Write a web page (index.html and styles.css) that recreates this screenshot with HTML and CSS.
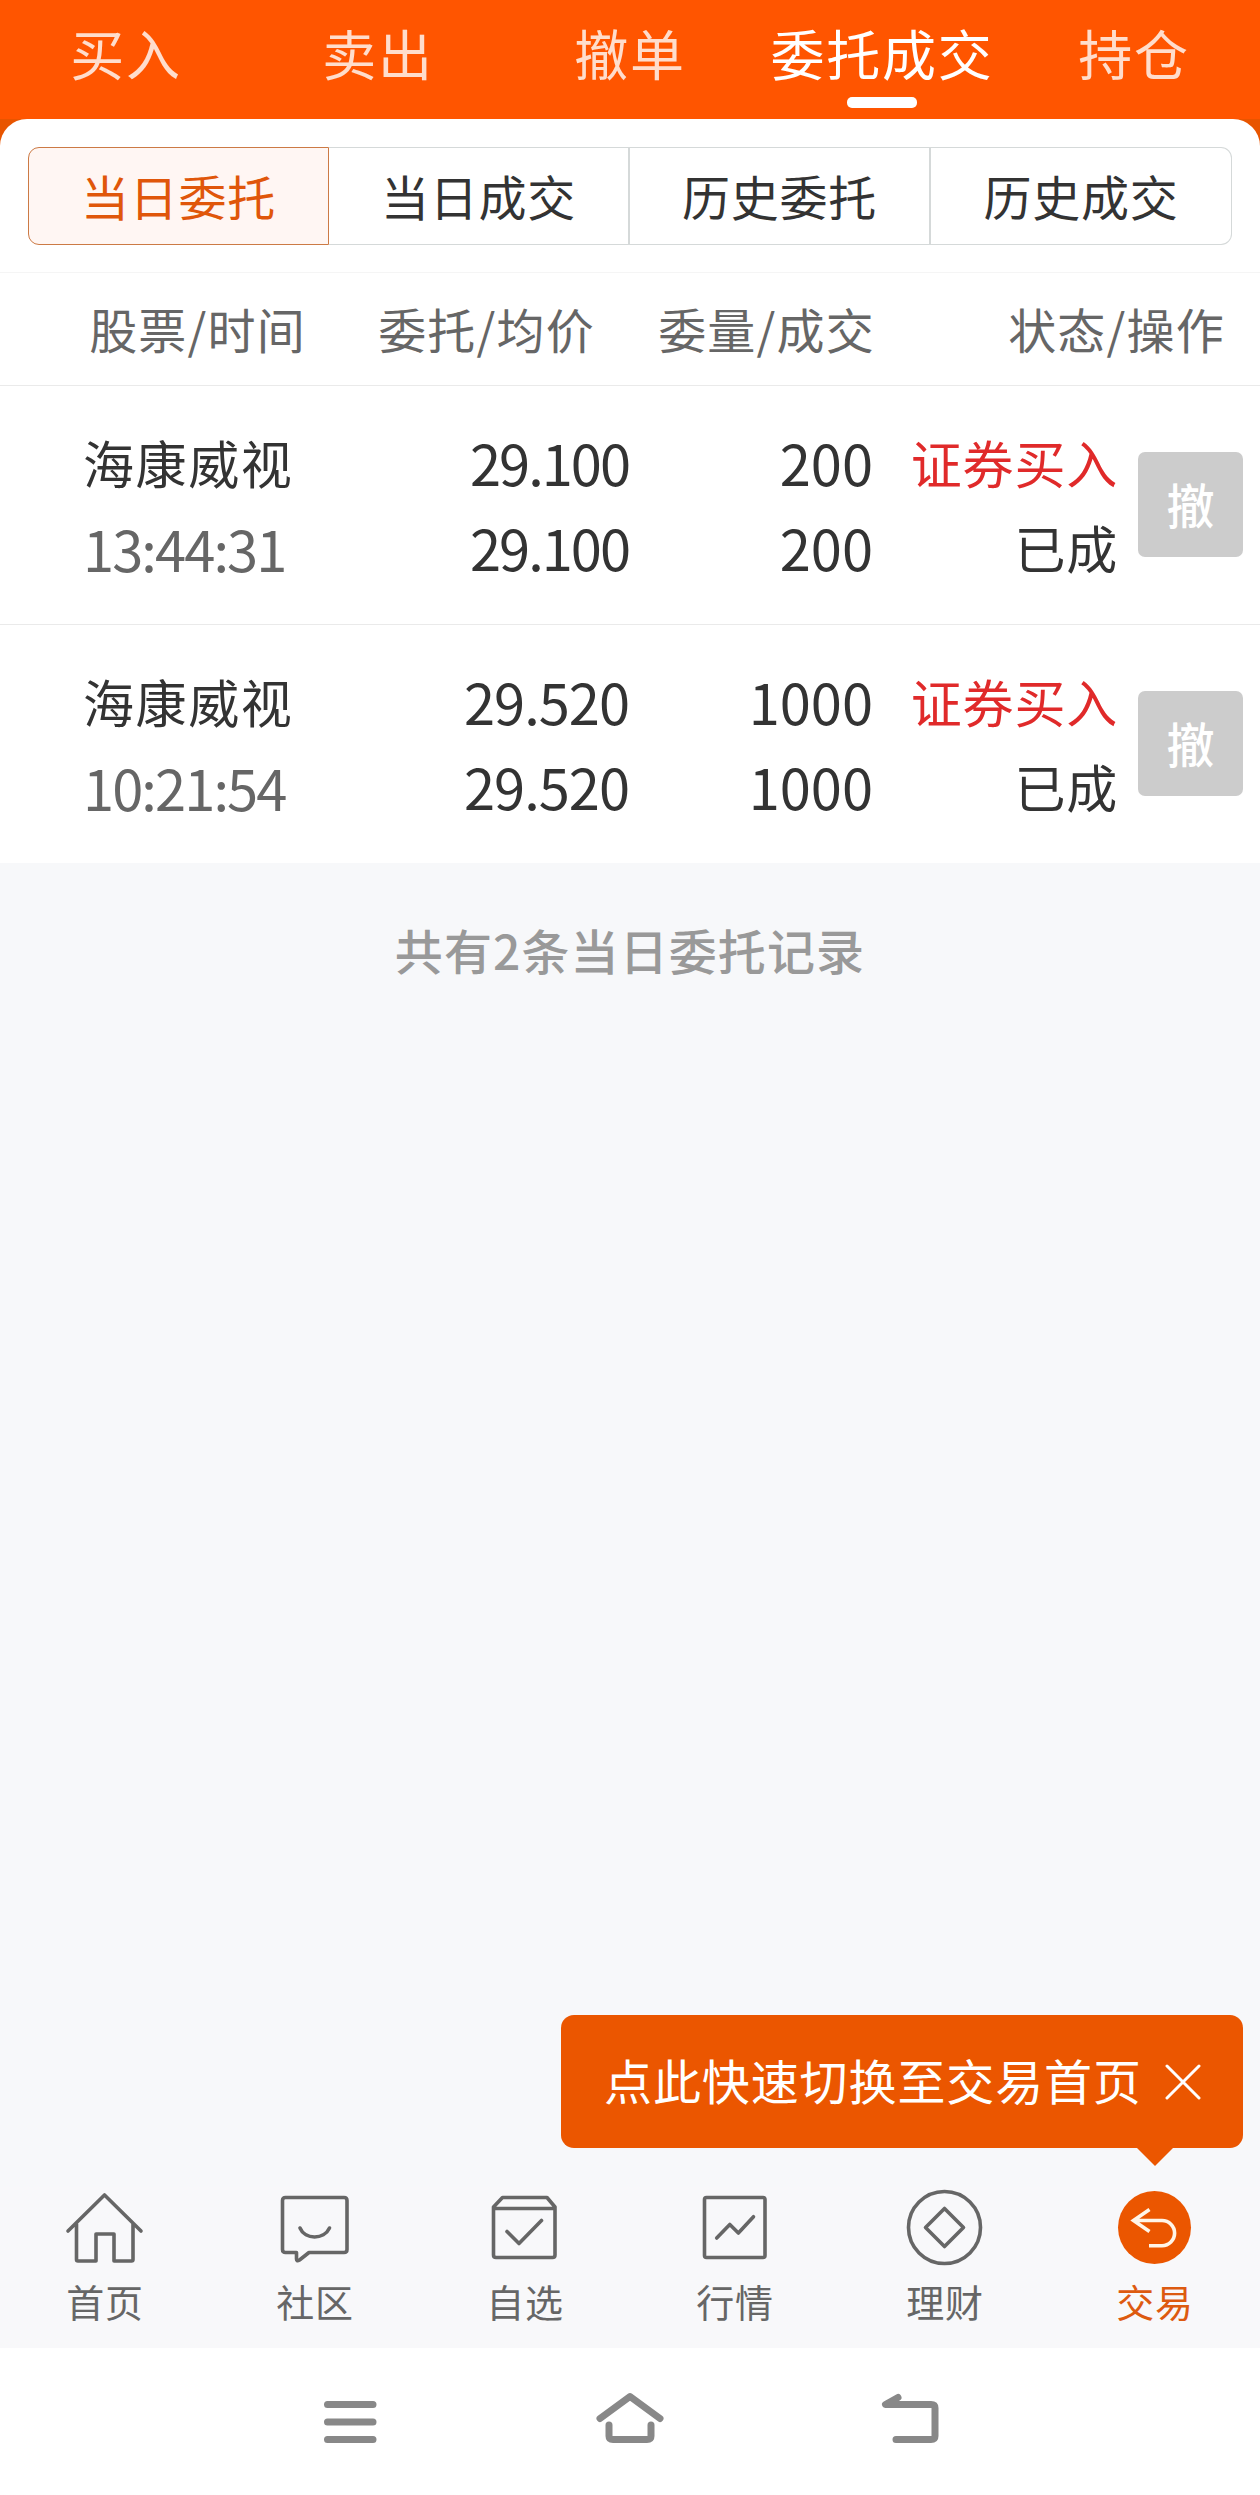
FILE: index.html
```
<!DOCTYPE html>
<html lang="zh-CN">
<head>
    <meta charset="UTF-8">
    <meta name="viewport" content="width=device-width, initial-scale=1.0">
    <title>委托成交</title>
    <link rel="stylesheet" href="styles.css">
</head>
<body>
    <nav class="top-tabs">
        <a class="top-tab">买入</a>
        <a class="top-tab">卖出</a>
        <a class="top-tab">撤单</a>
        <a class="top-tab active">委托成交</a>
        <a class="top-tab">持仓</a>
    </nav>

    <div class="panel-wrap">
        <div class="panel">
            <div class="segments">
                <div class="segment active">当日委托</div>
                <div class="segment">当日成交</div>
                <div class="segment">历史委托</div>
                <div class="segment">历史成交</div>
            </div>
            <div class="list-head">
                <span>股票/时间</span>
                <span>委托/均价</span>
                <span>委量/成交</span>
                <span>状态/操作</span>
            </div>
            <div class="order">
                <div class="cell stock"><span>海康威视</span><span class="time">13:44:31</span></div>
                <div class="cell price tight"><span>29.100</span><span>29.100</span></div>
                <div class="cell amount"><span>200</span><span>200</span></div>
                <div class="cell status"><span class="buy">证券买入</span><span>已成</span></div>
                <div class="cancel">撤</div>
            </div>
            <div class="order">
                <div class="cell stock"><span>海康威视</span><span class="time">10:21:54</span></div>
                <div class="cell price"><span>29.520</span><span>29.520</span></div>
                <div class="cell amount"><span>1000</span><span>1000</span></div>
                <div class="cell status"><span class="buy">证券买入</span><span>已成</span></div>
                <div class="cancel">撤</div>
            </div>
        </div>
    </div>

    <div class="summary">共有2条当日委托记录</div>

    <div class="tip">
        <span class="tip-text">点此快速切换至交易首页</span>
        <svg class="tip-close" width="36" height="36" viewBox="0 0 36 36"><path d="M2 2 34 34M34 2 2 34"/></svg>
    </div>

    <nav class="tab-bar">
        <a class="tab">
            <svg width="80" height="80" viewBox="0 0 80 80"><path d="M3 44 39.500 8 76 44M11.500 37V72.500Q11.500 74 13 74H31V47H49V74H66.500Q68 74 68 72.500V37"/></svg>
            <span>首页</span>
        </a>
        <a class="tab">
            <svg width="80" height="80" viewBox="0 0 80 80"><path d="M10.500 10.500H69Q72 10.500 72 13.500V62.500Q72 65.500 69 65.500H34L24.500 73Q21.500 75 21.500 72V65.500H10.500Q7.500 65.500 7.500 62.500V13.500Q7.500 10.500 10.500 10.500ZM25 41C30 53 49 53 54.500 41"/></svg>
            <span>社区</span>
        </a>
        <a class="tab">
            <svg width="80" height="80" viewBox="0 0 80 80"><path d="M17.500 10.500H62L70 20V68Q70 70.500 67.500 70.500H11Q8.500 70.500 8.500 68V20ZM8.500 21.500H70M22 44.500 34 56.500 56.500 33.500"/></svg>
            <span>自选</span>
        </a>
        <a class="tab">
            <svg width="80" height="80" viewBox="0 0 80 80"><rect x="9.500" y="10.500" width="60.500" height="60" rx="2"/><path d="M21.700 51 34.800 37.500 43.400 46 58.500 29.700"/></svg>
            <span>行情</span>
        </a>
        <a class="tab">
            <svg width="80" height="80" viewBox="0 0 80 80"><circle cx="39.500" cy="40.500" r="36"/><path d="M39.500 21.500 58.500 40.500 39.500 59.500 20.500 40.500Z"/></svg>
            <span>理财</span>
        </a>
        <a class="tab active">
            <svg width="80" height="80" viewBox="0 0 80 80"><circle class="disc" cx="39.500" cy="40.500" r="36.500"/><path class="arrow" d="M34.500 22.500 18.500 33.500 34.500 44.500M18.500 33.500H47A12.600 12.600 0 0 1 47 58.700H34"/></svg>
            <span>交易</span>
        </a>
    </nav>

    <div class="system-nav">
        <svg width="80" height="80" viewBox="0 0 80 80"><path d="M17.500 22.500H63M17.500 40H63M17.500 57.500H63"/></svg>
        <svg width="80" height="80" viewBox="0 0 80 80"><path d="M10 36.500 40 14.500 70 36.500M19 43V54Q19 57.500 23 57.500H57Q61 57.500 61 54V43"/></svg>
        <svg width="80" height="80" viewBox="0 0 80 80"><path d="M28 15.500 15.500 22.500H61Q65 22.500 65 26V54Q65 57.500 61 57.500H26"/></svg>
    </div>
</body>
</html>
```

FILE: styles.css
```
* {
    box-sizing: border-box;
}
body {
    margin: 0;
    height: 2495px;
    display: flex;
    flex-direction: column;
    font-family: "Noto Sans CJK SC", sans-serif;
    color: #333;
    background-color: #f7f8fa;
}
svg {
    display: block;
    fill: none;
    stroke-linecap: round;
    stroke-linejoin: round;
}

.top-tabs {
    display: flex;
    height: 119px;
    background-color: #ff5500;
}
.top-tab {
    position: relative;
    flex: 1;
    line-height: 105px;
    text-align: center;
    white-space: nowrap;
    font-size: 54px;
    letter-spacing: 1.7px;
    color: #ffddcc;
}
.top-tab.active {
    color: #fff;
}
.top-tab.active::after {
    content: "";
    position: absolute;
    left: 91px;
    top: 97px;
    width: 70px;
    height: 11px;
    border-radius: 5px;
    background-color: #fff;
}

.panel-wrap {
    background-color: #e85500;
}
.panel {
    padding-top: 28px;
    border-radius: 27px 27px 0 0;
    background-color: #fff;
}
.segments {
    display: flex;
    height: 98px;
    margin: 0 28px 27px;
}
.segment {
    width: 25%;
    border: 1px solid #d5d9d9;
    border-right-width: 2px;
    border-left-width: 0;
    line-height: 95px;
    text-align: center;
    font-size: 48px;
    letter-spacing: 0.8px;
}
.segment:first-child {
    border-radius: 11px 0 0 11px;
}
.segment:last-child {
    border-right-width: 1px;
    border-radius: 0 11px 11px 0;
}
.segment.active {
    border: 1px solid #cc7a45;
    color: #e0560a;
    background-color: #fff6f3;
}

.list-head {
    display: grid;
    grid-template-columns: 306px 289px 280px 350px;
    height: 114px;
    border-top: 1px solid #f5f5f5;
    border-bottom: 1px solid #eaeaea;
    line-height: 111px;
    text-align: right;
    font-size: 48px;
    letter-spacing: 1.2px;
    color: #666;
}

.order {
    display: grid;
    grid-template-columns: 245px 301px 244px 245px 125px;
    align-items: center;
    height: 239px;
    padding-left: 83px;
    border-bottom: 1px solid #eaeaea;
}
.order:last-child {
    height: 238px;
    border-bottom: none;
}
.cell {
    display: flex;
    flex-direction: column;
    line-height: 85px;
    text-align: right;
    font-size: 51px;
    letter-spacing: 1.6px;
}
.stock {
    text-align: left;
    white-space: nowrap;
}
.status {
    letter-spacing: 0.8px;
}
.price, .amount, .time {
    font-size: 56px;
}
.price, .amount {
    padding-bottom: 2px;
}
.price {
    letter-spacing: -1px;
}
.price.tight {
    letter-spacing: -2px;
}
.amount {
    letter-spacing: 0;
}
.time {
    letter-spacing: -1.9px;
    color: #666;
}
.buy {
    color: #e02a2a;
}
.cancel {
    width: 105px;
    height: 105px;
    margin: 0 0 2px 20px;
    border-radius: 7px;
    line-height: 102px;
    text-align: center;
    font-size: 48px;
    font-weight: 500;
    color: #fff;
    background-color: #ccc;
}

.summary {
    padding-top: 51px;
    line-height: 70px;
    text-align: center;
    font-size: 48px;
    font-weight: 500;
    letter-spacing: 1.1px;
    color: #999;
}

.tip {
    position: relative;
    display: flex;
    align-items: center;
    align-self: flex-end;
    width: 682px;
    height: 133px;
    margin: auto 17px 39px 0;
    padding-left: 43px;
    border-radius: 13px;
    font-size: 48px;
    letter-spacing: 0.9px;
    color: #fff;
    background-color: #eb5600;
}
.tip::after {
    content: "";
    position: absolute;
    right: 70px;
    bottom: -18px;
    border: 18px solid transparent;
    border-top-color: #eb5600;
    border-bottom-width: 0;
}
.tip-text {
    padding-bottom: 6px;
}
.tip-close {
    margin-left: 23px;
    stroke: #fff;
    stroke-width: 3;
}

.tab-bar {
    display: flex;
    height: 161px;
    background-color: #f8f8fa;
}
.tab {
    flex: 1;
    display: flex;
    flex-direction: column;
    align-items: center;
    font-size: 38px;
    line-height: 67px;
    letter-spacing: 0.8px;
    color: #666;
}
.tab svg {
    stroke: #666;
    stroke-width: 3.6;
}
.tab.active {
    color: #dd5a10;
}
.tab .disc {
    fill: #eb5600;
    stroke: none;
}
.tab .arrow {
    stroke: #fff5e8;
    stroke-linecap: butt;
    stroke-linejoin: miter;
}

.system-nav {
    display: flex;
    justify-content: center;
    gap: 200px;
    height: 147px;
    padding-top: 34px;
    background-color: #fff;
}
.system-nav svg {
    stroke: #888;
    stroke-width: 7;
}
```
